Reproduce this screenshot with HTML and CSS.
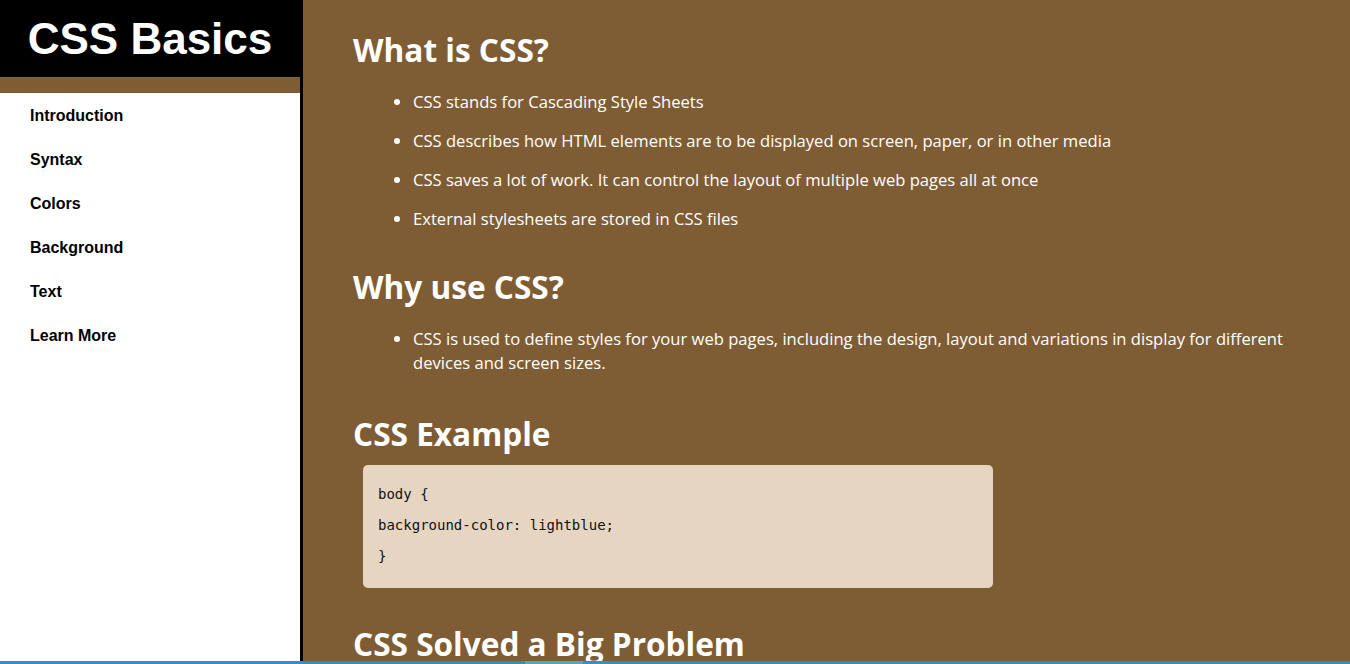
FILE: index.html
```html
<!DOCTYPE html>
<html lang="en">
<head>
<meta charset="utf-8">
<title>CSS Basics</title>
<link rel="stylesheet" href="styles.css">
</head>
<body>
<aside class="sidebar">
  <header class="brand"><h1 class="brand-title">CSS Basics</h1></header>
  <nav class="nav">
    <ul class="nav-list">
      <li class="nav-item">Introduction</li>
      <li class="nav-item">Syntax</li>
      <li class="nav-item">Colors</li>
      <li class="nav-item">Background</li>
      <li class="nav-item">Text</li>
      <li class="nav-item">Learn More</li>
    </ul>
  </nav>
</aside>
<main class="content">
  <section class="section">
    <h2 class="heading">What is CSS?</h2>
    <ul class="points">
      <li class="point">CSS stands for Cascading Style Sheets</li>
      <li class="point">CSS describes how HTML elements are to be displayed on screen, paper, or in other media</li>
      <li class="point">CSS saves a lot of work. It can control the layout of multiple web pages all at once</li>
      <li class="point">External stylesheets are stored in CSS files</li>
    </ul>
  </section>
  <section class="section">
    <h2 class="heading">Why use CSS?</h2>
    <ul class="points">
      <li class="point">CSS is used to define styles for your web pages, including the design, layout and variations in display for different devices and screen sizes.</li>
    </ul>
  </section>
  <section class="section">
    <h2 class="heading heading-code">CSS Example</h2>
    <div class="code">
      <p class="code-line">body {</p>
      <p class="code-line">background-color: lightblue;</p>
      <p class="code-line">}</p>
    </div>
  </section>
  <section class="section">
    <h2 class="heading heading-after-code">CSS Solved a Big Problem</h2>
  </section>
</main>
<div class="bottom-bar"><div class="bottom-thumb"></div></div>
</body>
</html>
```
FILE: styles.css
```css
html, body {
  margin: 0;
  padding: 0;
}
body {
  display: flex;
  min-height: 100vh;
  font-family: "Liberation Sans", Arial, sans-serif;
  background: #7f5d34;
}
.sidebar {
  width: 300px;
  flex: none;
  background: #ffffff;
  border-right: 3px solid #000000;
  min-height: 100vh;
}
.brand {
  background: #000000;
  border-bottom: 16px solid #7f5d34;
  height: 77px;
  display: flex;
  align-items: center;
  justify-content: center;
}
.brand-title {
  margin: 0;
  color: #ffffff;
  font-size: 44px;
  font-weight: bold;
}
.nav-list {
  list-style: none;
  margin: 0;
  padding: 7px 0 0 30px;
}
.nav-item {
  font-size: 16px;
  font-weight: bold;
  color: #000000;
  line-height: 20px;
  padding: 6px 0 18px;
}
.content {
  flex: 1;
  background: #7f5d34;
  padding: 0 50px;
  color: #ffffff;
  height: 100vh;
  overflow: hidden;
}
.section {
  margin: 0;
}
.heading {
  font-family: "Open Sans", "Liberation Sans", sans-serif;
  font-size: 31.6px;
  font-weight: bold;
  margin: 30px 0 20px;
  line-height: 40px;
}
.section + .section .heading {
  margin-top: 36px;
}
.section + .section .heading-code {
  margin-top: 39px;
}
.heading-code {
  margin-bottom: 11px;
}
.section + .section .heading-after-code {
  margin-top: 36px;
}
.points {
  margin: 0;
  padding-left: 60px;
}
.point {
  font-family: "Open Sans", "Liberation Sans", sans-serif;
  font-size: 16.6px;
  line-height: 24px;
  margin-bottom: 15px;
}
.code {
  margin-left: 10px;
  width: 600px;
  padding: 14px 15px 16px;
  background: #e5d5c1;
  border-radius: 5px;
  color: #111111;
}
.code-line {
  margin: 0;
  font-family: "DejaVu Sans Mono", monospace;
  font-size: 14px;
  line-height: 31px;
}
.bottom-bar {
  position: fixed;
  left: 0;
  right: 0;
  bottom: 0;
  height: 3px;
  background: #2b95c0;
}
.bottom-thumb {
  margin-left: 525px;
  width: 58px;
  height: 3px;
  background: #4ba7cd;
}
```
